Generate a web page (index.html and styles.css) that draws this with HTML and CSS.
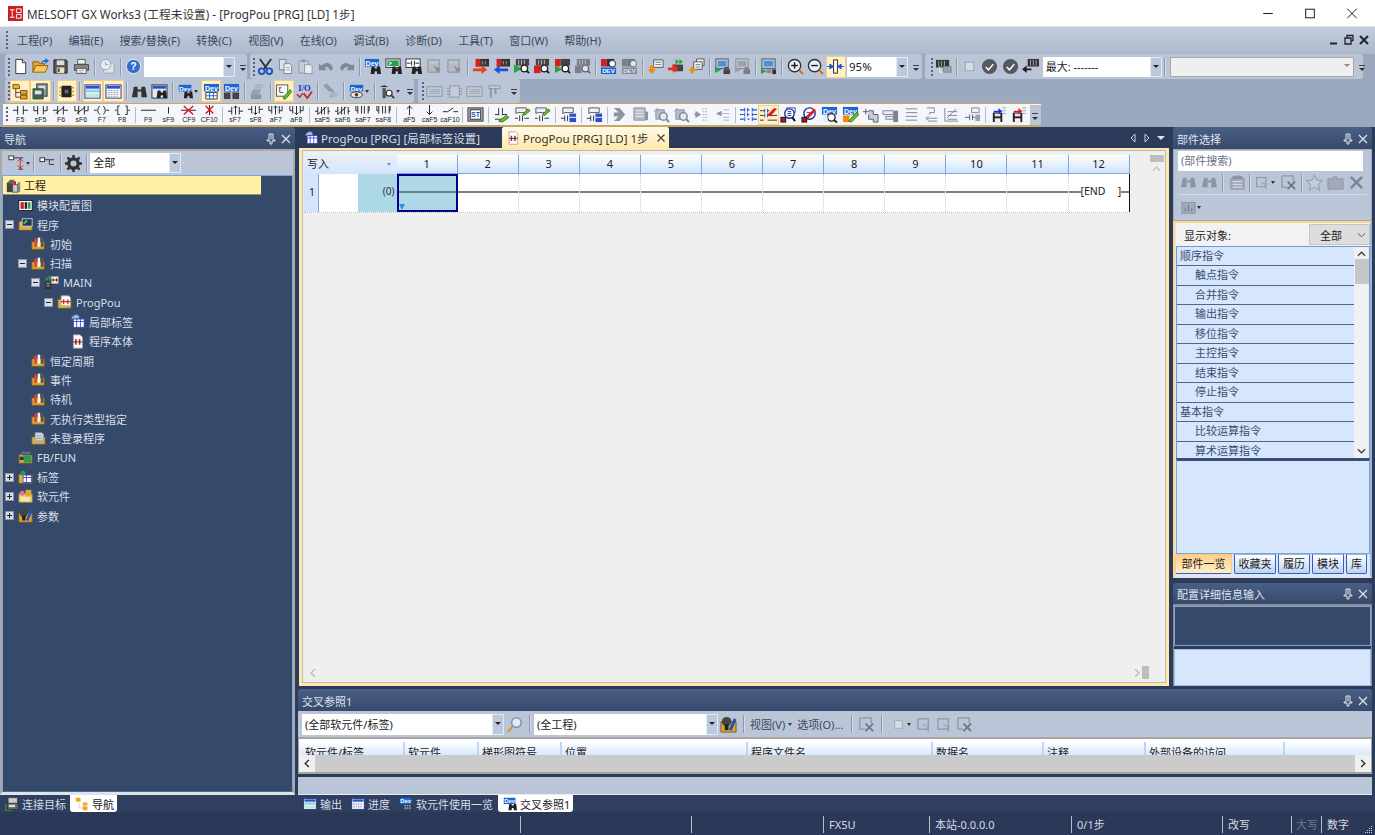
FILE: index.html
```html
<!DOCTYPE html>
<html lang="zh">
<head>
<meta charset="utf-8">
<title>MELSOFT GX Works3</title>
<link rel="stylesheet" href="styles.css">
</head>
<body>
<svg class="defs" width="0" height="0">
<defs>
<symbol id="new" viewBox="0 0 18 18"><path d="M4 1.500h7l3.500 3.500v11.500H4z" fill="#fff" stroke="#333"/><path d="M11 1.500V5h3.500" fill="#ddd" stroke="#333"/></symbol>
<symbol id="open" viewBox="0 0 18 18"><path d="M1 15V4h6l1 2h5v2" fill="#e8a92a" stroke="#8a5a10"/><path d="M1 15l3-7h13l-3 7z" fill="#f7c95a" stroke="#8a5a10"/><path d="M9 6c1-3 3-4 5-4V0l4 3-4 3.500V4c-2 0-3 1-5 2z" fill="#1f6fd0"/></symbol>
<symbol id="save" viewBox="0 0 18 18"><path d="M2 2h13l1 1v13H2z" fill="#555" stroke="#222"/><rect x="5" y="2.500" width="8" height="5" fill="#ddd"/><rect x="5" y="10" width="8" height="6" fill="#e8e0c8"/><rect x="6" y="11" width="2" height="4" fill="#444"/></symbol>
<symbol id="print" viewBox="0 0 18 18"><path d="M5 1.500h8v5H5z" fill="#eee" stroke="#555"/><path d="M1.500 7h15v6h-15z" fill="#888" stroke="#444"/><path d="M4 11h10v5.500H4z" fill="#fff" stroke="#555"/><path d="M6 13h6M6 15h5" stroke="#999"/></symbol>
<symbol id="clock" viewBox="0 0 18 18"><rect x="5" y="5" width="11" height="11" rx="1" fill="#dfe4ec" stroke="#9aa3b0"/><circle cx="7" cy="7" r="5.500" fill="#e9edf3" stroke="#9aa3b0"/><path d="M7 4v3h3" fill="none" stroke="#9aa3b0"/></symbol>
<symbol id="help" viewBox="0 0 18 18"><circle cx="9" cy="9" r="7.500" fill="#2f6fc8" stroke="#e8eef8"/><text x="9" y="13" text-anchor="middle" font-family="Liberation Sans" font-weight="700" font-size="11" fill="#fff">?</text></symbol>
<symbol id="cut" viewBox="0 0 18 18"><path d="M3 1l8 11M15 1L7 12" stroke="#333" stroke-width="2"/><circle cx="5" cy="14" r="3" fill="none" stroke="#1b4fc4" stroke-width="2"/><circle cx="13" cy="14" r="3" fill="none" stroke="#1b4fc4" stroke-width="2"/></symbol>
<symbol id="copy" viewBox="0 0 18 18"><path d="M2.500 1.500h7v11h-7z" fill="#dde2ea" stroke="#7b8494"/><path d="M7.500 6h6l2 2v8.500h-8z" fill="#eef0f4" stroke="#7b8494"/><path d="M9.500 10h4M9.500 12.500h4" stroke="#9aa3b0"/></symbol>
<symbol id="paste" viewBox="0 0 18 18"><path d="M2 3h10v13H2z" fill="#c7ccd6" stroke="#9098a6"/><rect x="5" y="1.500" width="4" height="3" fill="#9098a6"/><path d="M8 7h6l2 2v7.500H8z" fill="#e8ebf0" stroke="#9098a6"/></symbol>
<symbol id="undo" viewBox="0 0 18 18"><path d="M5 7c4-3 9-2 11 4l-3 3c-1-4-4-5-6-4l2 3H1V6l2 2z" fill="#7f8895"/></symbol>
<symbol id="redo" viewBox="0 0 18 18"><path d="M13 7C9 4 4 5 2 11l3 3c1-4 4-5 6-4l-2 3h8V6l-2 2z" fill="#7f8895"/></symbol>
<symbol id="bino" viewBox="0 0 18 18"><path d="M3 4h4v3h4V4h4l2 11h-6V9H7v6H1z" fill="#333"/></symbol>
<symbol id="devbino" viewBox="0 0 18 18"><rect x="1" y="1" width="15" height="8" fill="#1b66d0"/><text x="8.500" y="8" text-anchor="middle" font-family="Liberation Sans" font-weight="700" font-size="7.500" fill="#fff">Dev</text><path d="M8 9h3l.5 2h2l.5-2h3l1 8h-4l-.5-3h-2l-.5 3H7z" fill="#222"/></symbol>
<symbol id="greenbino" viewBox="0 0 18 18"><rect x="1" y="1" width="15" height="9" fill="#fff" stroke="#333"/><rect x="2.500" y="2.500" width="12" height="6" fill="#2c9c4f"/><path d="M4 4l3 1.500L4 7" stroke="#fff" fill="none"/><path d="M8 9h3l.5 2h2l.5-2h3l1 8h-4l-.5-3h-2l-.5 3H7z" fill="#222"/></symbol>
<symbol id="hcbino" viewBox="0 0 18 18"><rect x="1" y="1" width="15" height="9" fill="#fff" stroke="#333"/><path d="M2 5.500h4M11 5.500h4M7 3v5M10 3v5" stroke="#222"/><path d="M8 9h3l.5 2h2l.5-2h3l1 8h-4l-.5-3h-2l-.5 3H7z" fill="#222"/></symbol>
<symbol id="offdoc" viewBox="0 0 18 18"><rect x="2" y="2" width="12" height="13" fill="#aab2bf" stroke="#667"/><path d="M8 8l8 4-4 4z" fill="#667"/><path d="M4 5h8" stroke="#dfe3ea"/></symbol>
<symbol id="wr" viewBox="0 0 18 18"><rect x="4" y="1" width="14" height="8" fill="#333"/><rect x="4" y="1" width="5" height="8" fill="#d62020"/><path d="M11 3v4M14 3v4" stroke="#999"/><path d="M1 11h9V8l6 4.500L10 17v-3H1z" fill="#e8401c"/></symbol>
<symbol id="rd" viewBox="0 0 18 18"><rect x="4" y="1" width="14" height="8" fill="#333"/><rect x="4" y="1" width="5" height="8" fill="#d62020"/><path d="M11 3v4M14 3v4" stroke="#999"/><path d="M16 11H7V8l-6 4.500L7 17v-3h9z" fill="#1a52d8"/></symbol>
<symbol id="vf1" viewBox="0 0 18 18"><rect x="3" y="1" width="14" height="7" fill="#444"/><path d="M6 2v5M9 2v5M12 2v5" stroke="#bbb"/><path d="M1 7l9 4.500L1 16z" fill="#2aa043"/><circle cx="12" cy="11" r="3.500" fill="#fff" stroke="#222" stroke-width="1.500"/><path d="M14.500 13.500L17 16" stroke="#222" stroke-width="2"/></symbol>
<symbol id="vf2" viewBox="0 0 18 18"><rect x="3" y="1" width="14" height="7" fill="#444"/><path d="M6 2v5M9 2v5M12 2v5" stroke="#bbb"/><rect x="1" y="8" width="7" height="8" fill="#d82020"/><circle cx="12" cy="11" r="3.500" fill="#fff" stroke="#222" stroke-width="1.500"/><path d="M14.500 13.500L17 16" stroke="#222" stroke-width="2"/></symbol>
<symbol id="vf3" viewBox="0 0 18 18"><rect x="1" y="1" width="6" height="8" fill="#d62020"/><rect x="7" y="1" width="10" height="7" fill="#444"/><path d="M1 8l8 4-8 4z" fill="#2aa043"/><circle cx="12" cy="11" r="3.500" fill="#fff" stroke="#222" stroke-width="1.500"/><path d="M14.500 13.500L17 16" stroke="#222" stroke-width="2"/></symbol>
<symbol id="devbin" viewBox="0 0 18 18"><rect x="1" y="1" width="6" height="8" fill="#d62020"/><rect x="7" y="1" width="8" height="8" fill="#333"/><circle cx="13" cy="6" r="3.500" fill="#fff" stroke="#222"/><rect x="1" y="10" width="16" height="7" fill="#1b66d0"/><text x="9" y="16" text-anchor="middle" font-family="Liberation Sans" font-weight="700" font-size="6.500" fill="#fff">DEV</text></symbol>
<symbol id="cmtdown" viewBox="0 0 18 18"><path d="M7 2h10v8H7z" fill="#eef0f4" stroke="#555"/><path d="M9 4.500h6M9 7h6" stroke="#777"/><path d="M3 8h4v4h2.500L5 17 .5 12H3z" fill="#f08a10"/></symbol>
<symbol id="rg" viewBox="0 0 18 18"><path d="M9 1l4 3-4 3zM13 1l4 3-4 3z" fill="#2aa043"/><rect x="6" y="7" width="11" height="7" fill="#444"/><rect x="6" y="7" width="4" height="7" fill="#d62020"/><path d="M1 10h6V7l5 4.500L7 16v-3H1z" fill="#e8301c"/></symbol>
<symbol id="cmtdown2" viewBox="0 0 18 18"><path d="M9 1h8v7H9z" fill="#eef0f4" stroke="#555"/><path d="M6 4h9v8H6z" fill="#eef0f4" stroke="#555"/><path d="M8 7h5M8 9.500h5" stroke="#777"/><path d="M3 9h3v3h2.500L4.500 17 .5 12H3z" fill="#f08a10"/></symbol>
<symbol id="mon" viewBox="0 0 18 18"><rect x="2" y="1" width="13" height="10" fill="#bcd" stroke="#555"/><rect x="4" y="3" width="9" height="6" fill="#4d8fd8"/><path d="M1 9l7 3.500L1 16z" fill="#2aa043"/><path d="M10 12h7v5h-7z" fill="#444"/><rect x="12" y="10" width="3" height="3" fill="none" stroke="#444"/></symbol>
<symbol id="mon2" viewBox="0 0 18 18"><rect x="2" y="1" width="14" height="10" fill="#bcd" stroke="#555"/><rect x="4" y="3" width="10" height="6" fill="#4d8fd8"/><path d="M1 11l6 3-6 3z" fill="#2aa043"/><rect x="7" y="12" width="5" height="4" fill="#888"/><path d="M13 12h4v5h-4z" fill="#333"/></symbol>
<symbol id="zin" viewBox="0 0 18 18"><circle cx="8" cy="8" r="6.500" fill="#eef1f6" stroke="#333" stroke-width="1.500"/><path d="M4.500 8h7M8 4.500v7" stroke="#1a1a2a" stroke-width="1.500"/><path d="M13 13l4 4" stroke="#c8781a" stroke-width="2.200"/></symbol>
<symbol id="zout" viewBox="0 0 18 18"><circle cx="8" cy="8" r="6.500" fill="#eef1f6" stroke="#333" stroke-width="1.500"/><path d="M4.500 8h7" stroke="#1a1a2a" stroke-width="1.500"/><path d="M13 13l4 4" stroke="#c8781a" stroke-width="2.200"/></symbol>
<symbol id="fit" viewBox="0 0 18 18"><rect x="7" y="2" width="4" height="14" fill="#fff" stroke="#222"/><path d="M0 9h3V6.500L7 9l-4 2.500V9M18 9h-3V6.500L11 9l4 2.500V9" fill="#1b55d0" stroke="#1b55d0"/></symbol>
<symbol id="tree" viewBox="0 0 18 18"><path d="M1 1.500h6l1 1.500v3H1z" fill="#f0b030" stroke="#7a5510"/><path d="M4 6v9h5M4 10h5" stroke="#444" fill="none"/><path d="M9 8h7v4H9zM9 13h7v4H9z" fill="#e8a020" stroke="#7a5510"/></symbol>
<symbol id="pg" viewBox="0 0 18 18"><rect x="5" y="1" width="11" height="13" fill="#8a939f" stroke="#333"/><rect x="7" y="3" width="7" height="4" fill="#ddd"/><path d="M1 6h11v11H1z" fill="#4d5660" stroke="#1e7a3a"/><rect x="3" y="8" width="7" height="4" fill="#dfe4e8"/></symbol>
<symbol id="chip" viewBox="0 0 18 18"><rect x="3.500" y="3" width="11" height="12" rx="1" fill="#222"/><path d="M1 5h3M1 9h3M1 13h3M14 5h3M14 9h3M14 13h3" stroke="#c8a030" stroke-width="1.500"/><rect x="7" y="7" width="4" height="4" fill="#666"/></symbol>
<symbol id="win" viewBox="0 0 18 18"><rect x="1" y="2" width="16" height="14" fill="#fff" stroke="#1c2f90"/><rect x="2" y="3" width="14" height="3" fill="#2c50c8"/><rect x="2" y="7" width="14" height="3" fill="#8fd0e8"/><rect x="2" y="11" width="14" height="4" fill="#bfe8d8"/></symbol>
<symbol id="wingrid" viewBox="0 0 18 18"><rect x="1" y="2" width="16" height="14" fill="#fff" stroke="#1c2f90"/><rect x="2" y="3" width="14" height="3" fill="#2c50c8"/><path d="M3 8h12M3 10h12M3 12h12M3 14h12" stroke="#8c95a3" stroke-dasharray="2 1"/></symbol>
<symbol id="winfind" viewBox="0 0 18 18"><rect x="1" y="2" width="16" height="14" fill="#dfe6f2" stroke="#333"/><rect x="2" y="3" width="14" height="3" fill="#2c50c8"/><path d="M7 8h3l.5 2h2l.5-2h3l1 8h-4l-.5-3h-2l-.5 3H6z" fill="#222"/></symbol>
<symbol id="devgrid" viewBox="0 0 18 18"><rect x="1" y="1" width="16" height="8" fill="#1b66d0"/><text x="9" y="8" text-anchor="middle" font-family="Liberation Sans" font-weight="700" font-size="7.500" fill="#fff">Dev</text><path d="M3 10h12v7H3z" fill="#fff" stroke="#335"/><path d="M3 13.500h12M7 10v7M11 10v7" stroke="#1b66d0"/></symbol>
<symbol id="devblk" viewBox="0 0 18 18"><rect x="1" y="1" width="16" height="8" fill="#1b66d0"/><text x="9" y="8" text-anchor="middle" font-family="Liberation Sans" font-weight="700" font-size="7.500" fill="#fff">Dev</text><rect x="1" y="10" width="7" height="7" fill="#444"/><rect x="10" y="10" width="7" height="7" fill="#444"/></symbol>
<symbol id="stack" viewBox="0 0 18 18"><path d="M7 1h9l-2 5H5z" fill="#aeb5c0"/><path d="M4 7h9l-2 5H2z" fill="#98a0ad"/><rect x="2" y="12" width="11" height="5" fill="#8c95a3"/></symbol>
<symbol id="lblpen" viewBox="0 0 18 18"><rect x="1.500" y="2" width="12" height="12" fill="#f6f8fb" stroke="#555"/><path d="M4 5h3M5 5v5H9" stroke="#555" fill="none"/><path d="M9 15l7-8 2 2-7 8H9z" fill="#6ac02a" stroke="#3a7a14"/></symbol>
<symbol id="io" viewBox="0 0 18 18"><text x="9" y="8" text-anchor="middle" font-family="Liberation Serif" font-weight="700" font-size="9" fill="#1b2fb0">I/O</text><path d="M1 12l3 3 3-4" stroke="#d42020" stroke-width="1.600" fill="none"/><path d="M8 11l4 5 5-7" stroke="#d42020" stroke-width="1.800" fill="none"/></symbol>
<symbol id="tool" viewBox="0 0 18 18"><path d="M2 2l7 7M4 1l8 8-3 6" stroke="#9098a6" stroke-width="2" fill="none"/><path d="M8 11l6-2 3 4-5 3z" fill="#aeb5c0"/></symbol>
<symbol id="deveye" viewBox="0 0 18 18"><rect x="1" y="1" width="16" height="8" fill="#1b66d0"/><text x="9" y="8" text-anchor="middle" font-family="Liberation Sans" font-weight="700" font-size="7.500" fill="#fff">Dev</text><ellipse cx="9" cy="13" rx="7" ry="3.500" fill="#eee" stroke="#222"/><circle cx="9" cy="13" r="2.200" fill="#7a2a2a"/></symbol>
<symbol id="tower" viewBox="0 0 18 18"><path d="M1 3h8M5 1v3" stroke="#333" stroke-width="1.400"/><path d="M3 5h4v12H3z" fill="#555"/><circle cx="11" cy="11" r="3.500" fill="#fff" stroke="#333" stroke-width="1.400"/><path d="M13.500 13.500L17 17" stroke="#333" stroke-width="2"/></symbol>
<symbol id="grip1" viewBox="0 0 18 18"><rect x="1" y="4" width="16" height="10" fill="#c7cdd8" stroke="#8c95a3"/><path d="M3 7h12M3 9h12M3 11h12" stroke="#9aa3b0"/></symbol>
<symbol id="grip2" viewBox="0 0 18 18"><rect x="4" y="3" width="10" height="12" fill="#c7cdd8" stroke="#8c95a3"/><path d="M1 6h3M1 9h3M1 12h3M14 6h3M14 9h3M14 12h3" stroke="#8c95a3"/></symbol>
<symbol id="grip3" viewBox="0 0 18 18"><path d="M2 3h12v3H2z" fill="#c7cdd8" stroke="#8c95a3"/><path d="M4 6v10M9 6v6" stroke="#8c95a3" stroke-width="2"/></symbol>
<symbol id="mont" viewBox="0 0 18 18"><rect x="1" y="2" width="14" height="8" fill="#333"/><path d="M4 3v6M7 3v6M10 3v6" stroke="#aaa"/><path d="M5 9v6h5" stroke="#eee" fill="none"/><rect x="9" y="9" width="8" height="6" fill="#9aa3b0" stroke="#7b8494"/></symbol>
<symbol id="stop" viewBox="0 0 18 18"><rect x="4.500" y="4.500" width="9" height="9" fill="#d8dce3" stroke="#9aa3b0"/></symbol>
<symbol id="chk" viewBox="0 0 18 18"><circle cx="9" cy="9" r="8" fill="#555960"/><path d="M5 9.500l3 3 5-6" stroke="#fff" stroke-width="1.600" fill="none"/></symbol>
<symbol id="plcrd" viewBox="0 0 18 18"><rect x="6" y="1" width="12" height="8" fill="#333"/><path d="M9 2v6M12 2v6M15 2v6" stroke="#aaa"/><path d="M10 11H5V8L0 12l5 4v-3h5z" fill="#222"/></symbol>
<symbol id="gear" viewBox="0 0 18 18"><circle cx="9" cy="9" r="5" fill="none" stroke="#333" stroke-width="3.500"/><path d="M9 0v4M9 14v4M0 9h4M14 9h4M2.600 2.600l3 3M12.400 12.400l3 3M15.400 2.600l-3 3M5.600 12.400l-3 3" stroke="#333" stroke-width="2.600"/></symbol>
<symbol id="navt1" viewBox="0 0 18 18"><rect x="1" y="1" width="5" height="4" fill="#fff" stroke="#333"/><path d="M6 3h5" stroke="#333"/><path d="M13 3v12M10 7l3-3 3 3M10 11l3 3 3-3" stroke="#d42020" fill="none"/><path d="M11 3h5M11 15h5" stroke="#333"/></symbol>
<symbol id="navt2" viewBox="0 0 18 18"><rect x="1" y="3" width="5" height="4" fill="#fff" stroke="#333"/><path d="M6 5h5v5h5M11 5h5" stroke="#333" fill="none"/></symbol>
<symbol id="proj" viewBox="0 0 18 18"><path d="M1 6h7v11H1z" fill="#444"/><path d="M1 6l4-4h5v5z" fill="#666"/><rect x="8" y="8" width="6" height="9" fill="#ccc" stroke="#444"/><rect x="9" y="4" width="3" height="4" fill="#d62020"/><rect x="14" y="5" width="3" height="12" fill="#888"/></symbol>
<symbol id="modmap" viewBox="0 0 18 18"><rect x="1" y="3" width="16" height="12" fill="#fff" stroke="#111"/><rect x="3" y="5" width="4" height="8" fill="#c8202c"/><rect x="8" y="5" width="3" height="8" fill="#222"/><rect x="12" y="5" width="3" height="8" fill="#2c9c4f"/></symbol>
<symbol id="prog" viewBox="0 0 18 18"><path d="M1 5h4l1 1h11v10H1z" fill="#d9b24e" stroke="#6b5518"/><path d="M5 2h12v9H5z" fill="#1f3a5c" stroke="#cfe0e8"/><path d="M7 8l4-4" stroke="#5fc83a" stroke-width="2"/></symbol>
<symbol id="scan" viewBox="0 0 18 18"><path d="M1 7h15v9H1z" fill="#d9a63a" stroke="#7c5a14"/><rect x="4" y="3" width="3" height="10" fill="#ef3a30"/><rect x="8" y="2" width="3" height="11" fill="#f4f4f4"/><rect x="12" y="2" width="3" height="11" fill="#555"/></symbol>
<symbol id="main" viewBox="0 0 18 18"><rect x="1" y="8" width="8" height="9" fill="#333"/><path d="M3 10h4M3 13h4" stroke="#ccc"/><path d="M2 6l5-4 1 4" stroke="#2aa043" stroke-width="2" fill="none"/><path d="M9 2h8v8H9z" fill="#fff" stroke="#aaa"/><path d="M11 4v4M15 4v4" stroke="#d42020" stroke-width="1.500"/><path d="M9 6h8" stroke="#222"/></symbol>
<symbol id="pou" viewBox="0 0 18 18"><path d="M1 5h4l1 1h11v10H1z" fill="#d9b24e" stroke="#6b5518"/><path d="M5 1h9l2 2v10H5z" fill="#fff" stroke="#aaa"/><path d="M8 5v6M13 5v6M5 8h11" stroke="#d42020" stroke-width="1.500"/></symbol>
<symbol id="label" viewBox="0 0 18 18"><path d="M2 6c0-3 3-5 6-5s3 3 3 4" fill="#9cc4e8" stroke="#5a7fa8"/><rect x="4" y="6" width="13" height="10" fill="#fff" stroke="#3a3ac8"/><path d="M4 9h13M8 6v10M12.500 6v10" stroke="#3a3ac8"/></symbol>
<symbol id="body" viewBox="0 0 18 18"><path d="M4 1h8l3 3v13H4z" fill="#fff" stroke="#999"/><path d="M7 6v7M11.500 6v7" stroke="#d42020" stroke-width="2"/><path d="M4 9.500h11" stroke="#222"/></symbol>
<symbol id="unreg" viewBox="0 0 18 18"><path d="M1 7h16v9H1z" fill="#d9b24e" stroke="#6b5518"/><path d="M5 2h8l2 2v8H5z" fill="#cfd6e0" stroke="#8c95a3"/><path d="M7 6h6M7 9h6" stroke="#889"/></symbol>
<symbol id="fb" viewBox="0 0 18 18"><path d="M1 5h4l1 1h11v10H1z" fill="#c7a748" stroke="#6b5518"/><path d="M2 8h5v4H2z" fill="#1f3a5c"/><rect x="7" y="7" width="9" height="8" fill="#2c9c4f"/><path d="M4 2h11v3H4z" fill="#4d6fa8"/></symbol>
<symbol id="tag" viewBox="0 0 18 18"><path d="M1 5h4l1 1h11v10H1z" fill="#e0b84a" stroke="#7c5a14"/><circle cx="6" cy="4" r="3" fill="#2c9c4f"/><rect x="6" y="6" width="10" height="9" fill="#fff" stroke="#3a3ac8"/><path d="M6 9h10M10 6v9" stroke="#3a3ac8"/></symbol>
<symbol id="devf" viewBox="0 0 18 18"><path d="M1 6h16v10H1z" fill="#e8d88a" stroke="#9c8428"/><circle cx="5" cy="5" r="3" fill="#ef6f8c"/><rect x="9" y="1" width="7" height="8" fill="#e0a82a"/><path d="M3 11h11M3 13.500h11" stroke="#fff"/></symbol>
<symbol id="param" viewBox="0 0 18 18"><path d="M1 6h16v11H1z" fill="#d9a63a" stroke="#7c5a14"/><circle cx="7" cy="6" r="5" fill="#444"/><rect x="5" y="9" width="4" height="6" fill="#222"/><path d="M11 15l5-12" stroke="#1b4fc4" stroke-width="3"/></symbol>
<symbol id="conn" viewBox="0 0 18 18"><path d="M1 9v8h8" fill="none" stroke="#2c9c4f" stroke-width="1.500"/><rect x="4" y="1" width="12" height="8" fill="#ccc" stroke="#444"/><rect x="3" y="8" width="14" height="8" fill="#666" stroke="#333"/><rect x="5" y="10" width="8" height="3" fill="#ddd"/></symbol>
<symbol id="navi" viewBox="0 0 18 18"><path d="M1 1h6v5H1z" fill="#eea81a"/><path d="M10 7h6v4h-6zM10 12h6v5h-6z" fill="#eea81a"/><path d="M5 7v7h5" fill="none" stroke="#ccc"/></symbol>
<symbol id="devtab" viewBox="0 0 18 18"><rect x="1" y="1" width="15" height="8" fill="#1b66d0"/><text x="8.500" y="8" text-anchor="middle" font-family="Liberation Sans" font-weight="700" font-size="7.500" fill="#fff">Dev</text><path d="M7 11h8M7 13h8M7 15h8" stroke="#ccd" stroke-dasharray="2 1"/></symbol>
<symbol id="lens" viewBox="0 0 18 18"><circle cx="11" cy="7" r="5" fill="#d8ecfa" stroke="#7a8ea8" stroke-width="1.500"/><path d="M7 11l-5 6" stroke="#d89a30" stroke-width="2.500"/></symbol>
<symbol id="tpin" viewBox="0 0 12 12"><path d="M4 1h4v6h2v1H7v3H5V8H2V7h2zM6 1.500v5" fill="none" stroke="#e0e4ec"/></symbol>
<symbol id="tx" viewBox="0 0 12 12"><path d="M2 2l8 8M10 2l-8 8" stroke="#e0e4ec" stroke-width="1.200"/></symbol>
<symbol id="gbino" viewBox="0 0 18 18"><path d="M3 4h4v3h4V4h4l2 10h-6V9H7v5H1z" fill="#8c95a3"/><path d="M10 15l6-2-2-3" fill="#8c95a3"/></symbol>
<symbol id="gcal" viewBox="0 0 18 18"><ellipse cx="10" cy="4" rx="6" ry="2.500" fill="#8c95a3"/><rect x="3" y="5" width="14" height="11" fill="#a2aab6" stroke="#8c95a3"/><path d="M5 8h10M5 11h10M5 14h10" stroke="#dfe3ea"/></symbol>
<symbol id="gwin" viewBox="0 0 18 18"><path d="M2 3h11v11H2z" fill="none" stroke="#8c95a3" stroke-width="1.300"/><path d="M7 9l7 2-3 2 3 4" fill="none" stroke="#9aa3b0" stroke-width="1.300"/></symbol>
<symbol id="gwinx" viewBox="0 0 18 18"><path d="M2 2h12v6M2 2v12h6" fill="none" stroke="#8c95a3" stroke-width="1.300"/><path d="M8 8l8 8M16 8l-8 8" stroke="#6b7482" stroke-width="1.800"/></symbol>
<symbol id="gstar" viewBox="0 0 18 18"><path d="M9 1l2.500 5.500 6 .5-4.500 4 1.500 6L9 14l-5.500 3 1.500-6L.5 7l6-.5z" fill="#c7cdd8" stroke="#8c95a3"/></symbol>
<symbol id="gfold" viewBox="0 0 18 18"><path d="M1 5h5l1-2h3v2h7v11H1z" fill="#a2aab6" stroke="#8c95a3"/></symbol>
<symbol id="gx" viewBox="0 0 18 18"><path d="M3 3l12 12M15 3L3 15" stroke="#7b8494" stroke-width="2.500"/></symbol>
<symbol id="gchart" viewBox="0 0 18 18"><rect x="1" y="3" width="16" height="13" fill="#a2aab6" stroke="#8c95a3"/><path d="M5 14V9M9 14V6M13 14v-4" stroke="#667"/></symbol>
<symbol id="st" viewBox="0 0 18 18"><rect x="1" y="2" width="16" height="14" fill="#aeb5c0" stroke="#333"/><rect x="3.500" y="4" width="11" height="10" fill="#fff" stroke="#333"/><text x="9" y="12" text-anchor="middle" font-family="Liberation Sans" font-weight="700" font-size="7.500" fill="#1b4fc4">ST</text></symbol>
<symbol id="lpen" viewBox="0 0 18 18"><path d="M2 9h4M6 2v8M10 2v8M10 9h5M2 14h12" stroke="#333" fill="none"/><path d="M6 16l8-6 3 2-7 5z" fill="#6ac02a" stroke="#3a7a14"/></symbol>
<symbol id="cpen" viewBox="0 0 18 18"><path d="M2 2h11v5H4l-2 1z" fill="#eef0f4" stroke="#555"/><path d="M1 13h3M6 10v6M9 10v6M11 13h5" stroke="#333"/><path d="M9 9l6-6 2 2-6 5z" fill="#6ac02a" stroke="#3a7a14"/></symbol>
<symbol id="cblue" viewBox="0 0 18 18"><path d="M3 2h11v5H5l-2 1z" fill="#eef0f4" stroke="#555"/><path d="M1 13h4M5 10v6M8 10v6" stroke="#333"/><rect x="10" y="8" width="7" height="9" fill="#2c50c8"/><path d="M10 12h7" stroke="#fff"/></symbol>
<symbol id="garrow" viewBox="0 0 18 18"><path d="M2 2h6l6 7-6 7H2l5-5H2V7h5z" fill="#8c95a3"/></symbol>
<symbol id="gdoc" viewBox="0 0 18 18"><path d="M2 2h12v13H2z" fill="#b6bdc9" stroke="#8c95a3"/><path d="M4 5h8M4 8h8M4 11h8" stroke="#e6e9ef"/><path d="M14 6h3v9h-3z" fill="#8c95a3"/></symbol>
<symbol id="gfind" viewBox="0 0 18 18"><path d="M3 4h9v10H3z" fill="#b6bdc9" stroke="#8c95a3"/><path d="M1 6l4-4" stroke="#8c95a3"/><circle cx="11" cy="11" r="4" fill="#e6e9ef" stroke="#7b8494" stroke-width="1.500"/><path d="M14 14l3 3" stroke="#7b8494" stroke-width="2"/></symbol>
<symbol id="gsp" viewBox="0 0 18 18"><path d="M1 9h6M3 6l5 3-5 3z" fill="#8c95a3" stroke="#8c95a3"/><path d="M10 3h6M10 6h6M10 9h6M10 12h6M10 15h6" stroke="#aeb5c0" stroke-dasharray="2 1"/></symbol>
<symbol id="gsl" viewBox="0 0 18 18"><path d="M8 5L2 8l6 3z" fill="#8c95a3"/><path d="M8 8h2M10 4h6M10 8h6M10 12h6M10 15h6" stroke="#aeb5c0"/></symbol>
<symbol id="blines" viewBox="0 0 18 18"><path d="M0 4h5M8 4h2M13 4h5M0 9h4M8 9h2M13 9h5M0 14h4M8 14h2M13 14h5" stroke="#1b4fc4" stroke-width="1.300"/><path d="M5 2v4M8 2v4M5 7v4M8 7v4M13 2v4M13 7v4M5 12v4M13 12v4" stroke="#1b4fc4"/></symbol>
<symbol id="blinesp" viewBox="0 0 18 18"><path d="M0 5h5M8 5h2M0 10h4M8 10h10M0 15h4M8 15h10" stroke="#333"/><path d="M5 3v4M8 3v4M5 8v4M8 8v4" stroke="#1b4fc4"/><path d="M8 9l7-7 3 1-7 8z" fill="#e02020"/></symbol>
<symbol id="cfind" viewBox="0 0 18 18"><path d="M7 2h9v5H7z" fill="#fff" stroke="#1b4fc4"/><circle cx="10" cy="8" r="5" fill="#fff" stroke="#1b2f90" stroke-width="1.500"/><path d="M8 6h4M8 8h4M8 10h4" stroke="#1b2f90"/><rect x="1" y="12" width="5" height="5" fill="#c01020" stroke="#111"/><path d="M13 12l3 4" stroke="#111" stroke-width="2"/></symbol>
<symbol id="cfindp" viewBox="0 0 18 18"><circle cx="9" cy="8" r="6" fill="#fff" stroke="#1b2f90" stroke-width="1.500"/><path d="M5 11l9-8 2 2-8 8z" fill="#e02020"/><rect x="1" y="12" width="5" height="5" fill="#c01020" stroke="#111"/><path d="M6 7h4" stroke="#1b4fc4"/></symbol>
<symbol id="devlens" viewBox="0 0 18 18"><rect x="1" y="1" width="16" height="8" fill="#1b66d0"/><text x="9" y="8" text-anchor="middle" font-family="Liberation Sans" font-weight="700" font-size="7.500" fill="#fff">Dev</text><circle cx="11" cy="12" r="4" fill="#fff" stroke="#222" stroke-width="1.400"/><path d="M14 15l3 2.500" stroke="#222" stroke-width="2"/><path d="M2 11h5v6H2z" fill="#e0eaf8"/></symbol>
<symbol id="devpen" viewBox="0 0 18 18"><rect x="1" y="1" width="16" height="8" fill="#1b66d0"/><text x="9" y="8" text-anchor="middle" font-family="Liberation Sans" font-weight="700" font-size="7.500" fill="#fff">Dev</text><rect x="1" y="10" width="7" height="7" fill="#f08a10"/><path d="M7 16l8-9 3 2-8 8z" fill="#6ac02a" stroke="#3a7a14"/></symbol>
<symbol id="r1" viewBox="0 0 18 18"><path d="M1 6h6M4 3v6M7 5h5v4h5v8h-5v-3H7V9" fill="#c7cdd8" stroke="#555e6c"/></symbol>
<symbol id="r2" viewBox="0 0 18 18"><path d="M1 5h11v4H1zM12 11H4v3h8z" fill="#eef0f4" stroke="#7b8494"/><rect x="12" y="5" width="5" height="12" fill="#7b8494"/></symbol>
<symbol id="r3" viewBox="0 0 18 18"><path d="M3 3h12M3 7h12M3 11h12M3 15h12" stroke="#7b8494"/></symbol>
<symbol id="r4" viewBox="0 0 18 18"><path d="M4 2h8v5H7v2" fill="none" stroke="#7b8494"/><path d="M6 11l-3 2 3 2" fill="none" stroke="#7b8494"/><path d="M5 13h10M5 16h10" stroke="#7b8494"/></symbol>
<symbol id="r5" viewBox="0 0 18 18"><path d="M2 2v14h14" fill="none" stroke="#7b8494"/><path d="M5 6h10M5 10h10M5 14h10M4 13L14 3" stroke="#7b8494"/></symbol>
<symbol id="r6" viewBox="0 0 18 18"><path d="M8 2h8v5H8z" fill="#eef0f4" stroke="#7b8494"/><path d="M1 12h5M6 9v6M9 9v6M9 12h3" stroke="#555e6c"/><rect x="12" y="9" width="5" height="7" fill="#9aa3b0"/></symbol>
<symbol id="sv1" viewBox="0 0 18 18"><path d="M3 7h10v10H3z" fill="#222"/><rect x="5" y="8" width="6" height="3" fill="#e6e6e6"/><rect x="5" y="13" width="6" height="4" fill="#eee"/><path d="M4 5h5V2l4 3.500L9 9V7H4z" fill="#1b2ed8"/><path d="M13 2h4M13 5h4M13 8h4" stroke="#9aa3b0"/></symbol>
<symbol id="sv2" viewBox="0 0 18 18"><path d="M3 7h10v10H3z" fill="#222"/><rect x="5" y="8" width="6" height="3" fill="#e6e6e6"/><rect x="5" y="13" width="6" height="4" fill="#eee"/><path d="M4 5h5V2l4 3.500L9 9V7H4z" fill="#e01818"/><path d="M13 2h4M13 5h4M13 8h4" stroke="#9aa3b0"/></symbol>
<symbol id="lno" viewBox="0 0 18 11"><path d="M1 5.500h5M6 1v9M12 1v9M12 5.500h5" fill="none" stroke="#222"/></symbol>
<symbol id="lpo" viewBox="0 0 18 11"><path d="M2 1v5h4M6 1v9M12 1v9M12 6h4M16 1v5" fill="none" stroke="#222"/></symbol>
<symbol id="lnc" viewBox="0 0 18 11"><path d="M1 5.500h5M6 1v9M12 1v9M12 5.500h5M4 9l9-7" fill="none" stroke="#222"/></symbol>
<symbol id="lpc" viewBox="0 0 18 11"><path d="M2 1v5h4M6 1v9M12 1v9M12 6h4M16 1v5M4 9l9-7" fill="none" stroke="#222"/></symbol>
<symbol id="lcl" viewBox="0 0 18 11"><path d="M1 5.500h3M7 1Q3 5.500 7 10M11 1q4 4.500 0 9M14 5.500h3" fill="none" stroke="#222"/></symbol>
<symbol id="lfn" viewBox="0 0 18 11"><path d="M1 5.500h2M6 1H4v9h2M12 1h2v9h-2M15 5.500h2" fill="none" stroke="#222"/></symbol>
<symbol id="lhl" viewBox="0 0 18 11"><path d="M1 5.500h16" stroke="#222"/></symbol>
<symbol id="lvl" viewBox="0 0 18 11"><path d="M9 2v7" stroke="#222"/></symbol>
<symbol id="lxh" viewBox="0 0 18 11"><path d="M1 5.500h16" stroke="#222"/><path d="M4 1l10 9M14 1L4 10" stroke="#e01818" stroke-width="1.500"/></symbol>
<symbol id="lxv" viewBox="0 0 18 11"><path d="M9 0v11" stroke="#222"/><path d="M5 1l8 8M13 1L5 9" stroke="#e01818" stroke-width="1.500"/></symbol>
<symbol id="lu" viewBox="0 0 18 11"><path d="M1 6.500h4M5 2v8M13 2v8M13 6.500h4M9 10V1M7 3l2-2 2 2" fill="none" stroke="#222"/></symbol>
<symbol id="ld" viewBox="0 0 18 11"><path d="M1 4.500h4M5 1v8M13 1v8M13 4.500h4M9 1v9M7 8l2 2 2-2" fill="none" stroke="#222"/></symbol>
<symbol id="lpu" viewBox="0 0 18 11"><path d="M2 1v5h3M5 1v8M13 1v8M13 6h3M16 1v5M9 10V1M7 3l2-2 2 2" fill="none" stroke="#222"/></symbol>
<symbol id="lpd" viewBox="0 0 18 11"><path d="M2 1v5h3M5 1v8M13 1v8M13 6h3M16 1v5M9 1v9M7 8l2 2 2-2" fill="none" stroke="#222"/></symbol>
<symbol id="ldu" viewBox="0 0 18 11"><path d="M1 6.500h3M4 2v8M8 2v8M11 2v8M15 2v8M15 6.500h2M4 10l9-8" fill="none" stroke="#222"/></symbol>
<symbol id="ldp" viewBox="0 0 18 11"><path d="M2 1v5h2M4 1v8M8 1v8M11 1v8M15 1v8M15 6h1M16 1v5" fill="none" stroke="#222"/></symbol>
<symbol id="lup" viewBox="0 0 18 11"><path d="M9 11V1M6 4l3-3 3 3" fill="none" stroke="#222"/></symbol>
<symbol id="ldn" viewBox="0 0 18 11"><path d="M9 0v10M6 7l3 3 3-3" fill="none" stroke="#222"/></symbol>
<symbol id="ldi" viewBox="0 0 18 11"><path d="M1 7h5l6-4M12 7h5" fill="none" stroke="#222"/></symbol>
</defs>
</svg>

<div class="app">
  <header class="titlebar">
    <svg class="appicon" viewBox="0 0 16 16"><rect width="16" height="16" fill="#c8201c"/><path d="M2 4h5M4.500 4v8M2 12h5M9 3h5v4H9zM9 9h5v4H9z" stroke="#fff" fill="none"/></svg>
    <span class="apptitle">MELSOFT GX Works3 (工程未设置) - [ProgPou [PRG] [LD] 1步]</span>
    <span class="winbtns">
      <svg class="winbtn" viewBox="0 0 44 27"><path d="M17 13.500h10" stroke="#111"/></svg>
      <svg class="winbtn" viewBox="0 0 44 27"><rect x="17.500" y="9" width="9" height="9" fill="none" stroke="#111"/></svg>
      <svg class="winbtn" viewBox="0 0 44 27"><path d="M17 8.500l10 10M27 8.500l-10 10" stroke="#111"/></svg>
    </span>
  </header>

  <nav class="menubar">
    <span class="grip"></span>
    <span class="mi">工程(P)</span><span class="mi">编辑(E)</span><span class="mi">搜索/替换(F)</span><span class="mi">转换(C)</span><span class="mi">视图(V)</span><span class="mi">在线(O)</span><span class="mi">调试(B)</span><span class="mi">诊断(D)</span><span class="mi">工具(T)</span><span class="mi">窗口(W)</span><span class="mi">帮助(H)</span>
    <span class="mdi">
      <svg class="mdib" viewBox="0 0 12 12"><path d="M2 9.500h7" stroke="#223" stroke-width="2"/></svg>
      <svg class="mdib" viewBox="0 0 12 12"><path d="M4 3.500V1.500h6v5H8M2 4h6v6H2z" fill="none" stroke="#223" stroke-width="1.300"/></svg>
      <svg class="mdib" viewBox="0 0 12 12"><path d="M2 2l8 8M10 2l-8 8" stroke="#223" stroke-width="2"/></svg>
    </span>
  </nav>

  <div class="tbrow">
    <div class="tb g1">
      <span class="grip"></span>
      <span class="b"><svg><use href="#new"/></svg></span><span class="b"><svg><use href="#open"/></svg></span><span class="b"><svg><use href="#save"/></svg></span><span class="b"><svg><use href="#print"/></svg></span><span class="sep"></span>
      <span class="b"><svg><use href="#clock"/></svg></span><span class="sep"></span>
      <span class="b"><svg><use href="#help"/></svg></span>
      <span class="combo c91"><span class="ctext"></span><span class="cbtn"></span></span>
      <span class="ovf"></span>
    </div>
    <div class="tb g2">
      <span class="grip"></span>
      <span class="b"><svg><use href="#cut"/></svg></span><span class="b"><svg><use href="#copy"/></svg></span><span class="b"><svg><use href="#paste"/></svg></span><span class="b"><svg><use href="#undo"/></svg></span><span class="b"><svg><use href="#redo"/></svg></span><span class="sep"></span>
      <span class="b"><svg><use href="#devbino"/></svg></span><span class="b"><svg><use href="#greenbino"/></svg></span><span class="b"><svg><use href="#hcbino"/></svg></span><span class="b off"><svg><use href="#offdoc"/></svg></span><span class="b off"><svg><use href="#offdoc"/></svg></span><span class="sep"></span>
      <span class="b"><svg><use href="#wr"/></svg></span><span class="b"><svg><use href="#rd"/></svg></span><span class="b"><svg><use href="#vf1"/></svg></span><span class="b"><svg><use href="#vf2"/></svg></span><span class="b"><svg><use href="#vf3"/></svg></span><span class="b off"><svg><use href="#vf2"/></svg></span><span class="sep"></span>
      <span class="b"><svg><use href="#devbin"/></svg></span><span class="b off"><svg><use href="#devbin"/></svg></span><span class="sep"></span>
      <span class="b"><svg><use href="#cmtdown"/></svg></span><span class="b"><svg><use href="#rg"/></svg></span><span class="b"><svg><use href="#cmtdown2"/></svg></span><span class="sep"></span>
      <span class="b"><svg><use href="#mon"/></svg></span><span class="b off"><svg><use href="#mon"/></svg></span><span class="sep"></span>
      <span class="b"><svg><use href="#mon2"/></svg></span><span class="sep"></span>
      <span class="b"><svg><use href="#zin"/></svg></span><span class="b"><svg><use href="#zout"/></svg></span><span class="b hl"><svg><use href="#fit"/></svg></span>
      <span class="combo c61"><span class="ctext">95%</span><span class="cbtn"></span></span>
      <span class="ovf"></span>
    </div>
    <div class="tb g3">
      <span class="grip"></span>
      <span class="b"><svg><use href="#mont"/></svg></span><span class="sep"></span>
      <span class="b"><svg><use href="#stop"/></svg></span><span class="b"><svg><use href="#chk"/></svg></span><span class="b"><svg><use href="#chk"/></svg></span><span class="b"><svg><use href="#plcrd"/></svg></span>
      <span class="combo c119"><span class="ctext">最大: -------</span><span class="cbtn"></span></span>
      <span class="sep"></span>
      <span class="combo dis"><span class="ctext"></span><span class="cbtn"></span></span>
      <span class="ovf"></span>
    </div>
  </div>

  <div class="tbrow r2">
    <div class="tb g4">
      <span class="grip"></span>
      <span class="b hl"><svg><use href="#tree"/></svg></span><span class="b hl"><svg><use href="#pg"/></svg></span><span class="sep"></span>
      <span class="b hl"><svg><use href="#chip"/></svg></span><span class="sep"></span>
      <span class="b hl"><svg><use href="#win"/></svg></span><span class="b hl"><svg><use href="#wingrid"/></svg></span><span class="sep"></span>
      <span class="b"><svg><use href="#bino"/></svg></span><span class="b"><svg><use href="#winfind"/></svg></span><span class="sep"></span>
      <span class="b wide"><svg><use href="#devbino"/></svg><i class="dd"></i></span><span class="b hl"><svg><use href="#devgrid"/></svg></span><span class="b"><svg><use href="#devblk"/></svg></span><span class="sep"></span>
      <span class="b"><svg><use href="#stack"/></svg></span><span class="sep"></span>
      <span class="b hl"><svg><use href="#lblpen"/></svg></span><span class="b"><svg><use href="#io"/></svg></span><span class="sep"></span>
      <span class="b"><svg><use href="#tool"/></svg></span><span class="sep"></span>
      <span class="b wide"><svg><use href="#deveye"/></svg><i class="dd"></i></span><span class="sep"></span>
      <span class="b wide"><svg><use href="#tower"/></svg><i class="dd"></i></span>
      <span class="ovf"></span>
    </div>
    <div class="tb g5">
      <span class="grip"></span>
      <span class="b"><svg><use href="#grip1"/></svg></span><span class="b"><svg><use href="#grip2"/></svg></span><span class="b"><svg><use href="#grip1"/></svg></span><span class="b"><svg><use href="#grip3"/></svg></span>
      <span class="ovf"></span>
    </div>
  </div>

  <div class="ladderbar">
    <div class="tb lt">
      <span class="grip"></span>
      <span class="b lb"><svg><use href="#lno"/></svg><i>F5</i></span><span class="b lb"><svg><use href="#lpo"/></svg><i>sF5</i></span><span class="b lb"><svg><use href="#lnc"/></svg><i>F6</i></span><span class="b lb"><svg><use href="#lpc"/></svg><i>sF6</i></span><span class="b lb"><svg><use href="#lcl"/></svg><i>F7</i></span><span class="b lb"><svg><use href="#lfn"/></svg><i>F8</i></span><span class="sep"></span>
      <span class="b lb"><svg><use href="#lhl"/></svg><i>F9</i></span><span class="b lb"><svg><use href="#lvl"/></svg><i>sF9</i></span><span class="b lb"><svg><use href="#lxh"/></svg><i>CF9</i></span><span class="b lb"><svg><use href="#lxv"/></svg><i>CF10</i></span><span class="sep"></span>
      <span class="b lb"><svg><use href="#lu"/></svg><i>sF7</i></span><span class="b lb"><svg><use href="#ld"/></svg><i>sF8</i></span><span class="b lb"><svg><use href="#lpu"/></svg><i>aF7</i></span><span class="b lb"><svg><use href="#lpd"/></svg><i>aF8</i></span><span class="sep"></span>
      <span class="b lb"><svg><use href="#ldu"/></svg><i>saF5</i></span><span class="b lb"><svg><use href="#ldu"/></svg><i>saF6</i></span><span class="b lb"><svg><use href="#ldp"/></svg><i>saF7</i></span><span class="b lb"><svg><use href="#ldp"/></svg><i>saF8</i></span><span class="sep"></span>
      <span class="b lb"><svg><use href="#lup"/></svg><i>aF5</i></span><span class="b lb"><svg><use href="#ldn"/></svg><i>caF5</i></span><span class="b lb"><svg><use href="#ldi"/></svg><i>caF10</i></span><span class="sep"></span>
      <span class="b"><svg><use href="#st"/></svg></span><span class="sep"></span>
      <span class="b"><svg><use href="#lpen"/></svg></span><span class="b"><svg><use href="#cpen"/></svg></span><span class="b"><svg><use href="#cpen"/></svg></span><span class="sep"></span>
      <span class="b"><svg><use href="#cblue"/></svg></span><span class="sep"></span>
      <span class="b"><svg><use href="#cblue"/></svg></span><span class="sep"></span>
      <span class="b"><svg><use href="#garrow"/></svg></span><span class="b"><svg><use href="#gdoc"/></svg></span><span class="b"><svg><use href="#gfind"/></svg></span><span class="b"><svg><use href="#gfind"/></svg></span><span class="b"><svg><use href="#gsp"/></svg></span><span class="b"><svg><use href="#gsl"/></svg></span><span class="sep"></span>
      <span class="b"><svg><use href="#blines"/></svg></span><span class="b hl"><svg><use href="#blinesp"/></svg></span><span class="b"><svg><use href="#cfind"/></svg></span><span class="b"><svg><use href="#cfindp"/></svg></span><span class="b"><svg><use href="#devlens"/></svg></span><span class="b"><svg><use href="#devpen"/></svg></span><span class="b"><svg><use href="#r1"/></svg></span><span class="b"><svg><use href="#r2"/></svg></span><span class="b"><svg><use href="#r3"/></svg></span><span class="b"><svg><use href="#r4"/></svg></span><span class="b"><svg><use href="#r5"/></svg></span><span class="b"><svg><use href="#r6"/></svg></span><span class="sep"></span>
      <span class="b"><svg><use href="#sv1"/></svg></span><span class="b"><svg><use href="#sv2"/></svg></span>
      <span class="ovf"></span>
    </div>
  </div>

  <main class="work">
    <section class="pane leftpane">
      <div class="ptitle"><span>导航</span><span class="pbtns"><svg><use href="#tpin"/></svg><svg><use href="#tx"/></svg></span></div>
      <div class="pbody">
        <div class="navbar">
          <span class="b wide"><svg><use href="#navt1"/></svg><i class="dd"></i></span><span class="sep"></span>
          <span class="b"><svg><use href="#navt2"/></svg></span><span class="sep"></span>
          <span class="b"><svg><use href="#gear"/></svg></span><span class="sep"></span>
          <span class="combo c91"><span class="ctext">全部</span><span class="cbtn"></span></span>
        </div>
        <ul class="tree">
          <li class="row sel"><span class="ic"><svg><use href="#proj"/></svg></span><span>工程</span></li>
          <li class="row l1"><span class="tg none"></span><span class="ic"><svg><use href="#modmap"/></svg></span><span>模块配置图</span></li>
          <li class="row l1"><span class="tg minus"></span><span class="ic"><svg><use href="#prog"/></svg></span><span>程序</span></li>
          <li class="row l2"><span class="tg none"></span><span class="ic"><svg><use href="#scan"/></svg></span><span>初始</span></li>
          <li class="row l2"><span class="tg minus"></span><span class="ic"><svg><use href="#scan"/></svg></span><span>扫描</span></li>
          <li class="row l3"><span class="tg minus"></span><span class="ic"><svg><use href="#main"/></svg></span><span>MAIN</span></li>
          <li class="row l4"><span class="tg minus"></span><span class="ic"><svg><use href="#pou"/></svg></span><span>ProgPou</span></li>
          <li class="row l5"><span class="tg none"></span><span class="ic"><svg><use href="#label"/></svg></span><span>局部标签</span></li>
          <li class="row l5"><span class="tg none"></span><span class="ic"><svg><use href="#body"/></svg></span><span>程序本体</span></li>
          <li class="row l2"><span class="tg none"></span><span class="ic"><svg><use href="#scan"/></svg></span><span>恒定周期</span></li>
          <li class="row l2"><span class="tg none"></span><span class="ic"><svg><use href="#scan"/></svg></span><span>事件</span></li>
          <li class="row l2"><span class="tg none"></span><span class="ic"><svg><use href="#scan"/></svg></span><span>待机</span></li>
          <li class="row l2"><span class="tg none"></span><span class="ic"><svg><use href="#scan"/></svg></span><span>无执行类型指定</span></li>
          <li class="row l2"><span class="tg none"></span><span class="ic"><svg><use href="#unreg"/></svg></span><span>未登录程序</span></li>
          <li class="row l1"><span class="tg none"></span><span class="ic"><svg><use href="#fb"/></svg></span><span>FB/FUN</span></li>
          <li class="row l1"><span class="tg plus"></span><span class="ic"><svg><use href="#tag"/></svg></span><span>标签</span></li>
          <li class="row l1"><span class="tg plus"></span><span class="ic"><svg><use href="#devf"/></svg></span><span>软元件</span></li>
          <li class="row l1"><span class="tg plus"></span><span class="ic"><svg><use href="#param"/></svg></span><span>参数</span></li>
        </ul>
      </div>
    </section>

    <div class="rest">
      <div class="upper">
        <section class="center">
          <div class="doctabs">
            <span class="dtab"><svg><use href="#label"/></svg>ProgPou [PRG] [局部标签设置]</span>
            <span class="dtab act"><svg><use href="#body"/></svg>ProgPou [PRG] [LD] 1步<svg class="dx" viewBox="0 0 12 12"><path d="M2.500 2.500l7 7M9.500 2.500l-7 7" stroke="#444" stroke-width="1.200"/></svg></span>
            <span class="tabnav"><svg viewBox="0 0 8 12"><path d="M6 2L2 6l4 4z" fill="none" stroke="#c8d0dc"/></svg><svg viewBox="0 0 8 12"><path d="M2 2l4 4-4 4z" fill="none" stroke="#c8d0dc"/></svg><svg viewBox="0 0 8 12"><path d="M0 4h8L4 8z" fill="#dde3ec"/></svg></span>
          </div>
          <div class="docframe">
            <div class="docarea">
              <div class="ladder">
                <div class="lhead">
                  <span class="hw">写入</span><span class="hd"><i class="hdarrow"></i></span>
                  <span class="hc">1</span><span class="hc">2</span><span class="hc">3</span><span class="hc">4</span><span class="hc">5</span><span class="hc">6</span><span class="hc">7</span><span class="hc">8</span><span class="hc">9</span><span class="hc">10</span><span class="hc">11</span><span class="hc">12</span>
                </div>
                <div class="lrow">
                  <span class="rn">1</span><span class="rw"></span><span class="rs">(0)</span>
                  <span class="cell cur"><i class="mark"></i></span><span class="cell"></span><span class="cell"></span><span class="cell"></span><span class="cell"></span><span class="cell"></span><span class="cell"></span><span class="cell"></span><span class="cell"></span><span class="cell"></span><span class="cell"></span>
                  <span class="cell end"><b>[END   ]</b></span>
                </div>
              </div>
              <div class="vscroll"><span class="vthumb"></span><svg viewBox="0 0 10 6"><path d="M1 5l4-4 4 4" fill="none" stroke="#bbb" stroke-width="1.300"/></svg></div>
            </div>
            <div class="hscroll">
              <svg viewBox="0 0 6 10"><path d="M5 1L1 5l4 4" fill="none" stroke="#bbb" stroke-width="1.300"/></svg>
              <svg class="hsr" viewBox="0 0 6 10"><path d="M1 1l4 4-4 4" fill="none" stroke="#bbb" stroke-width="1.300"/></svg>
              <span class="hthumb"></span>
            </div>
          </div>
        </section>

        <aside class="right">
          <section class="pane parts">
            <div class="ptitle"><span>部件选择</span><span class="pbtns"><svg><use href="#tpin"/></svg><svg><use href="#tx"/></svg></span></div>
            <div class="partstool">
              <div class="search">(部件搜索)</div>
              <div class="ptb">
                <span class="b"><svg><use href="#gbino"/></svg></span><span class="b"><svg><use href="#gbino"/></svg></span><span class="sep"></span>
                <span class="b"><svg><use href="#gcal"/></svg></span><span class="sep"></span>
                <span class="b wide"><svg><use href="#gwin"/></svg><i class="dd"></i></span><span class="b"><svg><use href="#gwinx"/></svg></span><span class="sep"></span>
                <span class="b"><svg><use href="#gstar"/></svg></span><span class="b"><svg><use href="#gfold"/></svg></span><span class="b"><svg><use href="#gx"/></svg></span>
              </div>
              <div class="ptb2"><span class="b wide"><svg><use href="#gchart"/></svg><i class="dd"></i></span></div>
            </div>
            <div class="partsmain">
              <div class="show"><span class="showl">显示对象:</span><span class="showc">全部<svg viewBox="0 0 10 6"><path d="M1 1l4 4 4-4" fill="none" stroke="#444"/></svg></span></div>
              <div class="plist">
                <ul class="items">
                  <li class="it h">顺序指令</li><li class="it">触点指令</li><li class="it">合并指令</li><li class="it">输出指令</li><li class="it">移位指令</li><li class="it">主控指令</li><li class="it">结束指令</li><li class="it">停止指令</li><li class="it h">基本指令</li><li class="it">比较运算指令</li><li class="it">算术运算指令</li>
                </ul>
                <div class="pscroll">
                  <svg viewBox="0 0 10 6"><path d="M1 5l4-4 4 4" fill="none" stroke="#444" stroke-width="1.500"/></svg>
                  <span class="pthumb"></span>
                  <svg viewBox="0 0 10 6"><path d="M1 1l4 4 4-4" fill="none" stroke="#444" stroke-width="1.500"/></svg>
                </div>
              </div>
              <div class="pdesc"></div>
              <div class="ptabs"><span class="ptab act">部件一览</span><span class="ptab w42">收藏夹</span><span class="ptab w32">履历</span><span class="ptab w32">模块</span><span class="ptab w21">库</span></div>
            </div>
          </section>
          <section class="pane detail">
            <div class="ptitle"><span>配置详细信息输入</span><span class="pbtns"><svg><use href="#tpin"/></svg><svg><use href="#tx"/></svg></span></div>
            <div class="dbody"><div class="dtop"></div><div class="dbot"></div></div>
          </section>
        </aside>
      </div>

      <section class="pane bottom">
        <div class="ptitle"><span>交叉参照1</span><span class="pbtns"><svg><use href="#tpin"/></svg><svg><use href="#tx"/></svg></span></div>
        <div class="xbar">
          <span class="combo c202"><span class="ctext">(全部软元件/标签)</span><span class="cbtn"></span></span>
          <span class="b"><svg><use href="#lens"/></svg></span><span class="sep"></span>
          <span class="combo c184"><span class="ctext">(全工程)</span><span class="cbtn"></span></span>
          <span class="b"><svg><use href="#param"/></svg></span><span class="sep"></span>
          <span class="xtxt">视图(V)<i class="dd"></i></span><span class="xtxt">选项(O)...</span><span class="sep"></span>
          <span class="b"><svg><use href="#gwinx"/></svg></span><span class="sep"></span>
          <span class="b wide"><svg><use href="#stop"/></svg><i class="dd"></i></span><span class="b"><svg><use href="#gwin"/></svg></span><span class="b"><svg><use href="#gwin"/></svg></span><span class="b"><svg><use href="#gwinx"/></svg></span>
        </div>
        <div class="xtable">
          <div class="xhead">
            <span class="x1">软元件/标签</span><span class="x2">软元件</span><span class="x3">梯形图符号</span><span class="x4">位置</span><span class="x5">程序文件名</span><span class="x6">数据名</span><span class="x7">注释</span><span class="x8">外部设备的访问</span>
          </div>
          <div class="xscroll"><span class="xarrow"><svg viewBox="0 0 6 10"><path d="M5 1L1 5l4 4" fill="none" stroke="#333" stroke-width="1.600"/></svg></span><span class="xtrack"></span><span class="xarrow"><svg viewBox="0 0 6 10"><path d="M1 1l4 4-4 4" fill="none" stroke="#333" stroke-width="1.600"/></svg></span></div>
        </div>
        <div class="xstrip"></div>
      </section>
    </div>
  </main>

  <div class="dock">
    <div class="docktabs leftd">
      <span class="dk"><svg><use href="#conn"/></svg>连接目标</span><span class="dk act"><svg><use href="#navi"/></svg>导航</span>
    </div>
    <div class="docktabs rightd">
      <span class="dk"><svg><use href="#win"/></svg>输出</span><span class="dk"><svg><use href="#wingrid"/></svg>进度</span><span class="dk"><svg><use href="#devtab"/></svg>软元件使用一览</span><span class="dk act"><svg><use href="#devbino"/></svg>交叉参照1</span>
    </div>
  </div>

  <footer class="status">
    <span class="st s520"></span><span class="st s171"></span><span class="st s132"></span><span class="st s106">FX5U</span><span class="st s142">本站-0.0.0.0</span><span class="st s151">0/1步</span><span class="st s69">改写</span><span class="st s30 dim">大写</span><span class="st last">数字</span>
    <svg class="sgrip" viewBox="0 0 10 10"><path d="M8 1h1v1H8zM6 3h1v1H6zM8 3h1v1H8zM4 5h1v1H4zM6 5h1v1H6zM8 5h1v1H8zM2 7h1v1H2zM4 7h1v1H4zM6 7h1v1H6zM8 7h1v1H8z" fill="#cfd6e0"/></svg>
  </footer>
</div>
</body>
</html>
```
FILE: styles.css
```css
* { box-sizing: border-box; }
html, body { margin: 0; padding: 0; }
body { width: 1375px; height: 835px; overflow: hidden; background: #2b3b59; font-family: "Noto Sans", "Noto Sans CJK SC", sans-serif; font-size: 11px; color: #2b3348; }
.defs { position: absolute; }
ul { list-style: none; margin: 0; padding: 0; }
i { font-style: normal; }
.app { display: flex; flex-direction: column; width: 1375px; height: 835px; }

.titlebar { height: 27px; flex: none; background: #fff; display: flex; align-items: center; padding-left: 8px; border-bottom: 1px solid #e3e7ee; }
.appicon { width: 15px; height: 15px; margin-right: 4px; }
.apptitle { font-size: 11.700px; color: #333; white-space: nowrap; }
.winbtns { margin-left: auto; display: flex; padding-right: 2px; }
.winbtn { width: 42px; height: 27px; }

.menubar { height: 27px; flex: none; display: flex; align-items: center; background: linear-gradient(#c2cddd, #aeb9cc); padding-left: 5px; border-bottom: 1px solid #a8b4c8; }
.mi { font-size: 11px; color: #3c475c; margin-right: 16.300px; white-space: nowrap; }
.grip { flex: none; width: 4px; height: 18px; margin-right: 1px; background: repeating-linear-gradient(#59657c 0 2px, transparent 2px 4px) 1px 0 / 2px 100% no-repeat; }
.menubar .grip { margin-right: 8px; }
.mdi { margin-left: auto; display: flex; gap: 3px; padding-right: 5px; }
.mdib { width: 12px; height: 12px; }

.tbrow { height: 25px; flex: none; display: flex; gap: 3px; padding: 0 0 0 5px; background: #9aa8c0; }
.r2 { height: 24px; }
.tb { height: 100%; display: flex; align-items: center; background: #bac6d8; border-radius: 3px; padding-left: 2px; }
.tbrow .grip { margin-right: 0; margin-left: 0; width: 3px; }
.g1 { width: 242px; }
.g2 { width: 672px; }
.g3 { width: 438px; padding-left: 5px; }
.g3 .c119 { margin-left: 2px; }
.g3 .dis { margin-left: 2px; }
.g4 { width: 409px; }
.g5 { width: 102px; margin-left: 1px; padding-left: 3px; }
.b { flex: none; width: 20.400px; height: 22px; display: inline-flex; align-items: center; justify-content: center; border: 1px solid transparent; }
.b svg { width: 17px; height: 17px; flex: none; }
.b.wide { width: 25px; }
.b.wide svg { width: 15px; margin-left: 0; }
.dd { flex: none; width: 0; height: 0; margin-left: 1px; border: 2.500px solid transparent; border-top: 3px solid #333; border-bottom: 0; }
.b.hl { background: #fff0cc; border-color: #f1cd86; }
.off svg { filter: grayscale(1); opacity: .55; }
.sep { flex: none; width: 1px; height: 18px; margin: 0 2.400px; background: #8d99ae; box-shadow: 1px 0 0 #d3dbe7; }
.combo { flex: none; display: flex; height: 20px; background: #fff; }
.ctext { flex: 1; padding-left: 3px; line-height: 20px; font-size: 11px; color: #222; white-space: nowrap; overflow: hidden; }
.cbtn { flex: none; width: 12px; background: #bcc9dc; border: 1px solid #e3e9f2; position: relative; }
.cbtn::after { content: ""; display: block; margin: 7px auto 0; width: 0; height: 0; border: 3.500px solid transparent; border-top: 3.500px solid #222; border-bottom: 0; }
.c91 { width: 91px; }
.c61 { width: 61px; margin-left: 1px; }
.c61 .ctext { font-size: 11.500px; padding-left: 2px; }
.c119 { width: 119px; }
.c202 { width: 202px; }
.c184 { width: 184px; }
.dis { width: 184px; background: #efefef; border: 1px solid #a7a7a7; }
.dis .cbtn { background: none; border: 0; }
.dis .cbtn::after { border-top-color: #888; margin-top: 6px; }
.ovf { flex: none; width: 11px; height: 12px; margin: 8px 0 0 3px; background: linear-gradient(#444, #444) 2px 0 / 6px 1px no-repeat; position: relative; }
.ovf::after { content: ""; display: block; position: relative; top: 3px; left: 2px; width: 0; height: 0; border: 3px solid transparent; border-top: 3px solid #333; border-bottom: 0; }

.ladderbar { height: 24px; flex: none; background: #9aa8c0; padding-left: 3px; }
.lt { width: 1038px; background: #f4f6fc; border-top: 1px solid #c9a860; border-bottom: 2px solid #c9a860; border-radius: 0; padding-left: 2px; }
.lt .grip { width: 4px; height: 16px; }
.lt .b { height: 20px; }
.lt .b.lb svg { width: 17px; height: 10.500px; }
.lb { flex-direction: column; }
.lb i { font-family: "Liberation Sans", sans-serif; font-size: 7px; line-height: 8px; color: #222; white-space: nowrap; }
.lt .sep { height: 16px; margin: 0 2.250px; background: #b4bdcc; box-shadow: none; }
.lt .ovf { background-color: #bac6d8; height: 20px; margin: 0 0 0 1px; padding-top: 9px; background-position: 2px 8px; }

.work { flex: none; height: 668px; display: flex; }
.pane { display: flex; flex-direction: column; }
.ptitle { flex: none; height: 22px; background: linear-gradient(#4a5f85, #38496c); color: #dfe4ec; font-size: 11px; display: flex; align-items: center; justify-content: space-between; padding: 1px 3px 0 4px; border-radius: 3px 3px 0 0; }
.pbtns { display: flex; gap: 3px; }
.pbtns svg { width: 12px; height: 12px; }
.pbody { flex: 1; min-height: 0; display: flex; flex-direction: column; background: #bac6d8; border: 2px solid #a9a9a9; border-bottom: 3px solid #dfe3ea; }

.leftpane { width: 295px; flex: none; }
.navbar { flex: none; height: 24px; display: flex; align-items: center; padding-left: 4px; background: #bac6d8; }
.navbar .combo { width: 91px; margin-left: 1px; }
.navbar .b { width: 20.500px; }
.navbar .b.wide { width: 25px; }
.navbar .b.wide svg { width: 17px; }
.tree { flex: 1; background: #35496b; border: 1px solid #7ea6d9; border-bottom-color: #4d6a96; color: #d9dee7; overflow: hidden; }
.row { height: 19.430px; display: flex; align-items: center; white-space: nowrap; font-size: 11px; }
.row.sel { width: 258px; background: #fff0a3; color: #222; padding-left: 3px; border-bottom: 1px solid #8f8f7a; }
.sel .ic { margin-right: 3px; }
.l1 { padding-left: 2px; }
.l2 { padding-left: 15px; }
.l3 { padding-left: 28px; }
.l4 { padding-left: 41px; }
.l5 { padding-left: 54px; }
.tg { flex: none; width: 9px; height: 9px; margin-right: 4px; position: relative; background: #d8dde6; border: 1px solid #8795ad; }
.tg.none { background: none; border: 0; }
.tg.minus::after, .tg.plus::after { content: ""; position: absolute; left: 1px; top: 3px; width: 5px; height: 1px; background: #222; }
.tg.plus::before { content: ""; position: absolute; left: 3px; top: 1px; width: 1px; height: 5px; background: #222; }
.ic { flex: none; width: 15px; height: 15px; margin-right: 4px; }
.ic svg { width: 15px; height: 15px; display: block; }

.rest { flex: 1; min-width: 0; display: flex; flex-direction: column; padding-left: 3px; }
.upper { flex: none; height: 559px; display: flex; }
.center { width: 872px; flex: none; display: flex; flex-direction: column; }
.doctabs { flex: none; height: 21px; display: flex; align-items: stretch; padding-left: 5px; background: #2b3b59; font-size: 11.500px; }
.dtab { display: flex; align-items: center; gap: 3px; color: #d8dde6; white-space: nowrap; width: 199px; padding-left: 1px; }
.dtab svg { width: 14px; height: 14px; flex: none; }
.dtab.act { width: 167px; background: linear-gradient(#fffbe8, #ffe9ad); color: #333; padding-left: 4px; border-radius: 2px 2px 0 0; }
.dtab.act .dx { width: 12px; height: 12px; margin-left: 3px; }
.tabnav { margin-left: auto; display: flex; align-items: center; gap: 6px; padding-right: 5px; }
.tabnav svg { width: 8px; height: 12px; }
.docframe { flex: 1; min-height: 0; display: flex; flex-direction: column; background: #efefef; border: 3px solid #ffe8ab; border-top-width: 2px; margin-left: 1px; margin-right: 1px; box-shadow: inset 0 0 0 1px #b9b9b9; padding: 5px 5px 3px 2px; }
.docarea { flex: 1; min-height: 0; display: flex; }
.ladder { width: 825.700px; flex: none; }
.lhead { height: 19px; display: grid; grid-template-columns: 54px 38.500px repeat(12, 61.100px); }
.hw { font-size: 11px; color: #222; padding-left: 3px; line-height: 18px; background: linear-gradient(#e6f0fc, #d4e5fb); }
.hd { background: linear-gradient(#e6f0fc, #d4e5fb); display: flex; align-items: center; justify-content: flex-end; padding-right: 6px; }
.hdarrow { width: 0; height: 0; border: 2.500px solid transparent; border-top: 3px solid #7a8ea8; border-bottom: 0; }
.hc { text-align: center; font-family: "Noto Sans", sans-serif; font-size: 11px; line-height: 18px; color: #222; background: linear-gradient(#ffffff, #cfe3fb); border-right: 1px solid #7ea6d9; border-bottom: 1px solid #7ea6d9; }
.lrow { height: 39px; display: grid; grid-template-columns: 15px 39px 38.500px repeat(12, 61.100px); border-bottom: 1px dotted #bbb; background: #fff; }
.rn { background: #d4e5fb; border-right: 1px solid #7ea6d9; font-size: 10.500px; color: #222; line-height: 37px; padding-left: 5px; }
.rs { background: #add8e6; font-size: 10px; color: #333; text-align: right; line-height: 35px; padding-right: 2px; }
.cell { position: relative; border-right: 1px dotted #ccc; background: linear-gradient(#808080, #808080) 0 17px / 100% 2px no-repeat; display: flex; align-items: center; }
.cell.cur { background: linear-gradient(#6f7f86, #6f7f86) 0 15px / 100% 2px no-repeat, #add8e6; border: 2px solid #00008b; }
.mark { position: absolute; left: 0; bottom: 0; width: 0; height: 0; border: 3px solid transparent; border-top: 6px solid #2f8fe0; border-bottom: 0; }
.cell.end { border-right: 1px solid #111; justify-content: flex-start; padding-left: 12px; padding-bottom: 3px; }
.end b { font-weight: 400; font-family: "Noto Sans", sans-serif; font-size: 10.500px; color: #222; background: #fff; line-height: 13px; white-space: pre; word-spacing: 1.400px; }
.vscroll { width: 16px; margin-left: 19px; flex: none; display: flex; flex-direction: column; align-items: center; gap: 4px; }
.vthumb { width: 14px; height: 7px; background: #bdbdbd; }
.vscroll svg { width: 9px; height: 6px; }
.hscroll { flex: none; height: 15px; display: flex; align-items: center; padding-left: 6px; }
.hscroll svg { width: 6px; height: 10px; }
.hscroll .hsr { margin-left: 818px; }
.hthumb { width: 7px; height: 13px; background: #bdbdbd; margin-left: 2px; }

.right { width: 199px; flex: none; margin-left: 3px; display: flex; flex-direction: column; gap: 5px; }
.parts { flex: none; height: 451px; }
.partstool { flex: none; height: 72px; background: #bac6d8; border: 1px solid #9ca9bd; border-top-color: #a9a9a9; padding: 1px 4px 0; }
.search { height: 20px; background: #fff; font-size: 11px; color: #6a7285; line-height: 19px; padding-left: 3px; margin-right: 4px; }
.ptb { display: flex; align-items: center; height: 24px; border-bottom: 1px solid #d3dbe7; margin-right: 0; }
.ptb .b { width: 21px; }
.ptb .b.wide { width: 25px; }
.ptb2 { height: 24px; display: flex; align-items: center; }
.ptb2 .b { width: 26px; }
.partsmain { flex: 1; min-height: 0; display: flex; flex-direction: column; background: #d6e6fc; border: 2px solid #ffd58a; border-left-width: 2px; border-bottom: 2px solid #dfe3ea; border-right-color: #9cb5d8; padding-left: 1px; }
.show { flex: none; height: 23px; background: #f2f2f2; display: flex; align-items: center; justify-content: space-between; padding-left: 8px; }
.showl { color: #222; }
.showc { width: 61px; height: 21px; background: #ddd; border: 1px solid #c5c5c5; display: flex; align-items: center; justify-content: space-between; padding: 0 3px 0 10px; color: #222; }
.showc svg { width: 9px; height: 6px; }
.plist { flex: none; height: 212px; display: flex; border: 1px solid #6b9bd8; border-bottom: 0; overflow: hidden; }
.items { flex: 1; }
.it { height: 19.470px; line-height: 18px; padding-left: 18px; background: #d6e6fc; border-bottom: 1px solid #52658a; color: #3c4d6e; font-size: 11px; }
.it.h { padding-left: 3px; }
.pscroll { flex: none; width: 15px; background: #f0f0f0; display: flex; flex-direction: column; align-items: center; padding-top: 4px; }
.pscroll svg { width: 9px; height: 6px; flex: none; }
.pthumb { width: 14px; height: 25px; margin-top: 2px; background: #c6c6c6; flex: none; }
.pscroll svg:last-child { margin-top: auto; margin-bottom: 4px; }
.pdesc { flex: none; height: 96px; background: #d6e6fc; border: 1px solid #7ea6d9; border-top: 3px solid #3c5076; margin-right: 0; }
.ptabs { flex: 1; min-height: 0; display: flex; align-items: stretch; gap: 1px; background: #dbe8fb; }
.ptab { width: 41px; font-size: 11px; color: #222; text-align: center; line-height: 17px; background: linear-gradient(#fff, #bcd2f2); border: 1px solid #2f62c0; border-top-color: #9cb5d8; margin: 0 1px 2px 0; border-radius: 0 0 2px 2px; }
.ptab.act { width: 57px; background: linear-gradient(#ffcf8a, #ffedc8); border-color: #ffc880; border-bottom-color: #2f62c0; margin-left: -1px; }
.w42 { width: 42px; }
.w32 { width: 32px; }
.w21 { width: 21px; }
.detail { flex: 1; min-height: 0; }
.detail .ptitle { height: 21px; }
.dbody { flex: 1; display: flex; flex-direction: column; gap: 3px; background: #2b3b59; border: 1px solid #8c8c8c; border-top-width: 2px; border-bottom: 0; min-height: 0; }
.dtop { height: 40px; background: #35496b; border: 1px solid #7ea6d9; }
.dbot { flex: 1; background: #d6e6fc; border: 1px solid #9cbde8; }

.bottom { flex: none; height: 106px; margin-top: 3px; margin-right: 3px; }
.xbar { flex: none; height: 26px; display: flex; align-items: center; background: #bac6d8; padding-left: 4px; }
.xbar .combo { height: 21px; }
.xbar .ctext { line-height: 21px; }
.xbar .b { width: 20px; }
.xbar .b.wide { width: 26px; margin-left: 2px; }
.xbar .sep { margin: 0 4.500px; }
.xtxt { color: #3c475c; font-size: 11px; margin: 0 3px 0 2px; display: inline-flex; align-items: center; white-space: nowrap; }
.xtxt .dd { margin-left: 3px; }
.xtable { flex: none; height: 37px; background: #fff; border: 1px solid #a5a5a5; border-width: 2px 1px; padding-top: 3px; display: flex; flex-direction: column; }
.xhead { height: 13px; overflow: hidden; display: flex; padding-left: 3px; background: linear-gradient(#fff, #d8e8fc); font-size: 11px; line-height: 21px; color: #222; white-space: nowrap; }
.xhead span { padding-left: 3px; border-right: 2px solid #bfd6f5; height: 13px; flex: none; }
.x1 { width: 103px; }
.x2 { width: 74px; }
.x3 { width: 83px; }
.x4 { width: 186px; }
.x5 { width: 185px; }
.x6 { width: 111px; }
.x7 { width: 102px; }
.x8 { width: 139px; }
.xscroll { flex: 1; display: flex; background: #cbcbcb; }
.xarrow { flex: none; width: 16px; background: #f0f0f0; display: flex; align-items: center; justify-content: center; }
.xarrow svg { width: 6px; height: 9px; }
.xtrack { flex: 1; }
.xstrip { flex: 1; margin-top: 3px; background: #bac6d8; border-bottom: 1px solid #e8ecf2; }

.dock { flex: none; height: 17px; display: flex; background: #2e3f5f; font-size: 11px; }
.docktabs { display: flex; align-items: stretch; color: #d8dde6; white-space: nowrap; }
.leftd { width: 298px; padding-left: 5px; }
.rightd { padding-left: 5px; }
.dk { display: flex; align-items: center; gap: 3px; padding: 0 4px 0 0; }
.dk svg { width: 14px; height: 14px; flex: none; }
.dk.act { background: #fff; color: #222; border-radius: 0 0 3px 3px; padding: 0 3px 0 5px; }
.rightd .dk { padding-right: 9px; }
.rightd .dk.act { padding-right: 3px; padding-left: 5px; margin-left: -4px; }

.status { flex: 1; display: flex; align-items: stretch; background: #2b3857; color: #d6dbe4; font-size: 11px; padding-top: 4px; }
.st { flex: none; border-left: 1px solid #b7bfcc; padding-left: 5px; line-height: 17px; height: 17px; white-space: nowrap; }
.s520 { width: 520px; border-left: 0; }
.s171 { width: 171px; }
.s132 { width: 132px; }
.s106 { width: 106px; }
.s142 { width: 142px; }
.s151 { width: 151px; }
.s69 { width: 69px; }
.s30 { width: 30px; padding-left: 4px; }
.dim { color: #6e7a90; }
.last { width: 38px; }
.sgrip { width: 10px; height: 10px; margin-top: 9px; margin-left: 4px; }
```
